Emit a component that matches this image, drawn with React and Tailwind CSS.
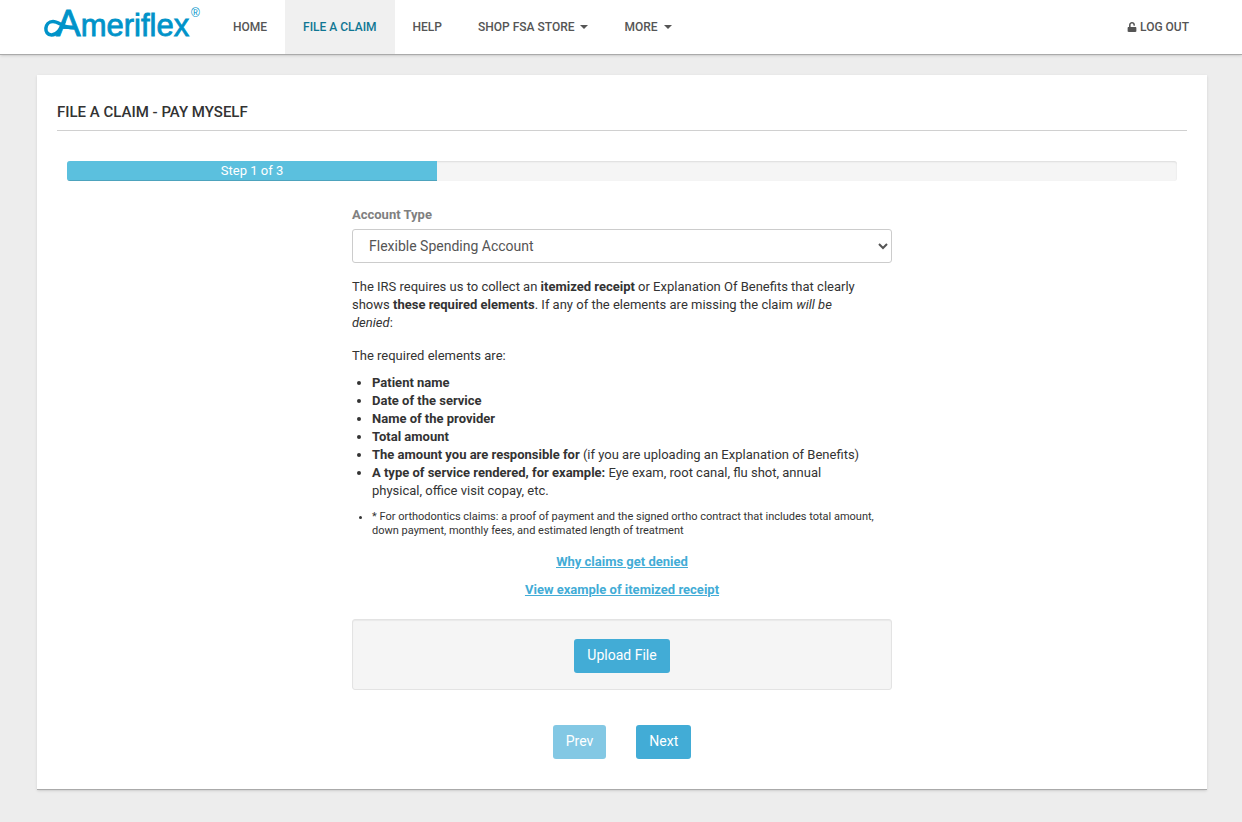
import { useState } from "react";
import { FaUnlock } from "react-icons/fa";

const requiredElements = [
  { title: "Patient name" },
  { title: "Date of the service" },
  { title: "Name of the provider" },
  { title: "Total amount" },
  {
    title: "The amount you are responsible for",
    detail: "(if you are uploading an Explanation of Benefits)",
  },
  {
    title: "A type of service rendered, for example:",
    detail: "Eye exam, root canal, flu shot, annual physical, office visit copay, etc.",
  },
];

function Logo() {
  return (
    <a href="#home" aria-label="Ameriflex" className="block shrink-0">
      <svg width="160" height="48" viewBox="0 0 160 48" fill="#0093c9" className="overflow-visible">
        {/* ribbon that loops out of the A and back through its bar */}
        <path
          d="M20 22 C16 30 13 35 7.500 35 C-0.500 35 0 21.500 9 21.500 C15 21.500 19 28 30 28"
          fill="none"
          stroke="#0093c9"
          strokeWidth="3.500"
          strokeLinecap="round"
        />
        <g
          stroke="#0093c9"
          strokeWidth="0.800"
          fontFamily="'Liberation Sans', Arial, sans-serif"
        >
          <text x="12" y="36" fontSize="31">
            <tspan fontSize="37">A</tspan>
            meriflex
          </text>
        </g>
        <text x="147" y="17" fontSize="12" fontFamily="'Liberation Sans', Arial, sans-serif">
          ®
        </text>
      </svg>
    </a>
  );
}

function NavLink({ href, active, caret, children }) {
  return (
    <a
      href={href}
      className={`flex items-center gap-1.5 px-[18px] text-xs font-medium ${
        active ? "bg-[#f0f0f0] text-[#0f7693]" : "text-[#555]"
      }`}
    >
      {children}
      {caret && (
        <span className="border-x-4 border-t-4 border-x-transparent border-t-[#555]" />
      )}
    </a>
  );
}

function Header() {
  return (
    <header className="flex h-[55px] justify-between border-b border-[#aaa] bg-white pr-9 pl-11 shadow-sm">
      <nav className="flex">
        <Logo />
        <div className="ml-[11px] flex">
          <NavLink href="#home">HOME</NavLink>
          <NavLink href="#claim" active>
            FILE A CLAIM
          </NavLink>
          <NavLink href="#help">HELP</NavLink>
          <NavLink href="#store" caret>
            SHOP FSA STORE
          </NavLink>
          <NavLink href="#more" caret>
            MORE
          </NavLink>
        </div>
      </nav>
      <a href="#logout" className="flex items-center gap-[3px] px-[17px] text-xs font-medium text-[#555]">
        <FaUnlock className="size-2.5" />
        LOG OUT
      </a>
    </header>
  );
}

function Button({ children, ...props }) {
  return (
    <button
      type="button"
      className="block h-[34px] rounded-[3px] bg-[#42acd6] px-[13px] pb-0.5 text-sm text-white disabled:opacity-65"
      {...props}
    >
      {children}
    </button>
  );
}

export default function App() {
  const [account, setAccount] = useState("fsa");

  return (
    <div className="min-h-screen bg-[#ededed] font-['Roboto',sans-serif] text-[13px] leading-[18px] text-[#333]">
      <Header />
      <main className="mt-5 mr-[35px] ml-[37px] border-b border-[#aaa] bg-white px-5 pt-[27px] pb-[30px] shadow-sm">
        <h1 className="border-b border-[#d0d0d0] pb-2 text-[15px] leading-5 font-medium text-[#333]">
          FILE A CLAIM - PAY MYSELF
        </h1>

        <div className="mx-2.5 mt-[30px] h-5 overflow-hidden rounded-[3px] bg-[#f5f5f5] shadow-[inset_0_1px_2px_rgba(0,0,0,0.1)]">
          <div className="h-full w-1/3 bg-[#5bc0de] text-center leading-5 text-white shadow-[inset_0_-1px_0_rgba(0,0,0,0.15)]">
            Step 1 of 3
          </div>
        </div>

        <form className="mx-auto mt-[25px] max-w-[540px]" onSubmit={(e) => e.preventDefault()}>
          <label htmlFor="account" className="block font-bold text-[#808080]">
            Account Type
          </label>
          <select
            id="account"
            value={account}
            onChange={(e) => setAccount(e.target.value)}
            className="mt-[5px] block h-[34px] w-full rounded-[3px] border border-[#ccc] bg-white px-3 text-sm text-[#555]"
          >
            <option value="fsa">Flexible Spending Account</option>
          </select>

          <p className="mt-[15px] pr-5">
            The IRS requires us to collect an <b>itemized receipt</b> or Explanation Of Benefits
            that clearly shows <b>these required elements</b>. If any of the elements are missing
            the claim <i>will be denied</i>:
          </p>
          <p className="mt-[15px]">The required elements are:</p>

          <ul className="mt-[9px] list-disc pr-5 pl-5">
            {requiredElements.map((item) => (
              <li key={item.title}>
                <b>{item.title}</b> {item.detail}
              </li>
            ))}
          </ul>
          <ul className="mt-2.5 list-disc pl-5 text-[11px] leading-[14px]">
            <li>
              * For orthodontics claims: a proof of payment and the signed ortho contract that
              includes total amount, down payment, monthly fees, and estimated length of treatment
            </li>
          </ul>

          <div className="mt-[15px] flex flex-col items-center gap-2.5 font-bold text-[#42acd6] underline">
            <a href="#denied">Why claims get denied</a>
            <a href="#example">View example of itemized receipt</a>
          </div>

          <div className="mt-5 flex justify-center rounded-[3px] border border-[#e3e3e3] bg-[#f5f5f5] pt-[19px] pb-4 shadow-[inset_0_1px_1px_rgba(0,0,0,0.05)]">
            <Button>Upload File</Button>
          </div>

          <div className="mt-[35px] flex justify-center gap-[30px]">
            <Button disabled>Prev</Button>
            <Button>Next</Button>
          </div>
        </form>
      </main>
    </div>
  );
}
